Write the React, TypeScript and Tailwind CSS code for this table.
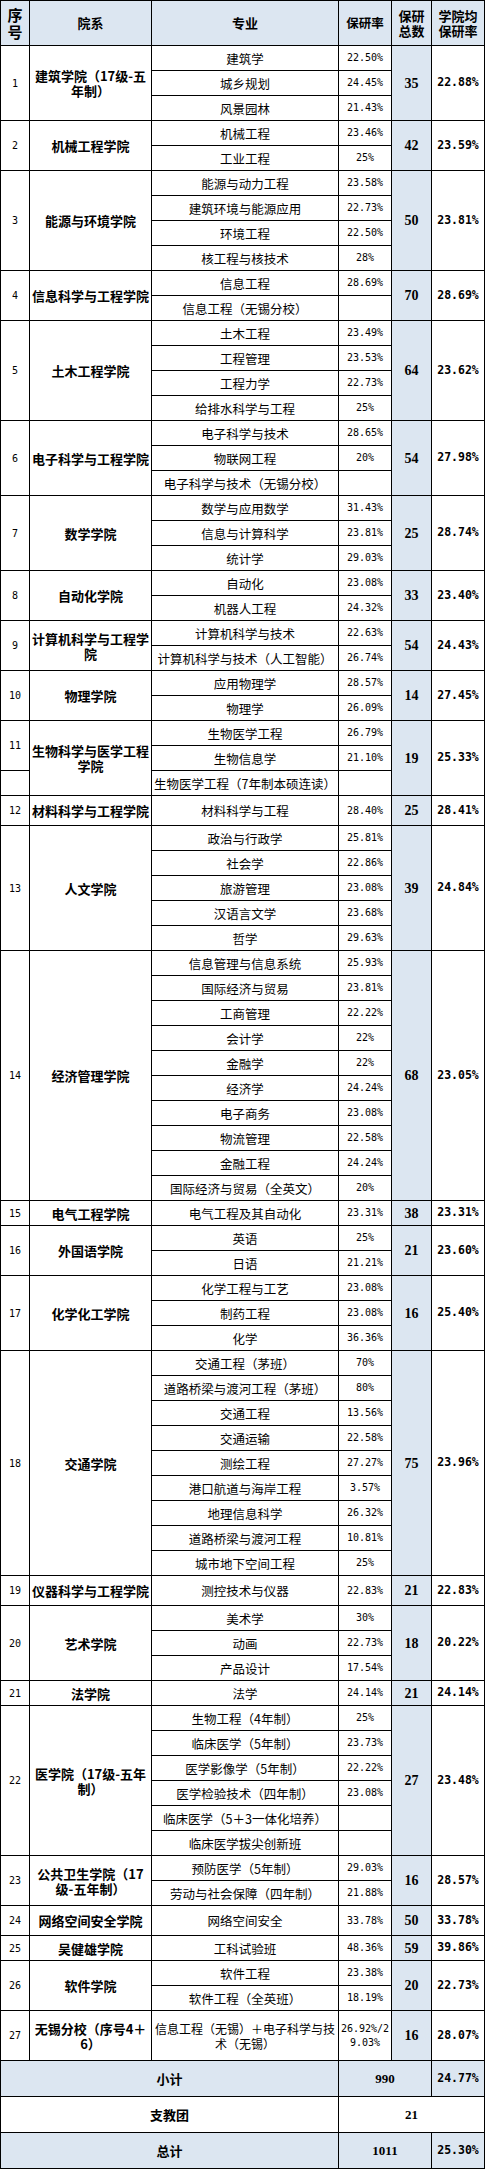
import React from "react";

type College = {
  no: string;
  name: React.ReactNode;
  majors: [React.ReactNode, React.ReactNode][];
  total: string;
  avg: string;
  h?: string;
};

const colleges: College[] = [
  {
    no: "1",
    name: (
      <>
        建筑学院（17级-五
        <br />
        年制）
      </>
    ),
    majors: [
      ["建筑学", "22.50%"],
      ["城乡规划", "24.45%"],
      ["风景园林", "21.43%"],
    ],
    total: "35",
    avg: "22.88%",
  },
  {
    no: "2",
    name: "机械工程学院",
    majors: [
      ["机械工程", "23.46%"],
      ["工业工程", "25%"],
    ],
    total: "42",
    avg: "23.59%",
  },
  {
    no: "3",
    name: "能源与环境学院",
    majors: [
      ["能源与动力工程", "23.58%"],
      ["建筑环境与能源应用", "22.73%"],
      ["环境工程", "22.50%"],
      ["核工程与核技术", "28%"],
    ],
    total: "50",
    avg: "23.81%",
  },
  {
    no: "4",
    name: "信息科学与工程学院",
    majors: [
      ["信息工程", "28.69%"],
      ["信息工程（无锡分校）", ""],
    ],
    total: "70",
    avg: "28.69%",
  },
  {
    no: "5",
    name: "土木工程学院",
    majors: [
      ["土木工程", "23.49%"],
      ["工程管理", "23.53%"],
      ["工程力学", "22.73%"],
      ["给排水科学与工程", "25%"],
    ],
    total: "64",
    avg: "23.62%",
  },
  {
    no: "6",
    name: "电子科学与工程学院",
    majors: [
      ["电子科学与技术", "28.65%"],
      ["物联网工程", "20%"],
      ["电子科学与技术（无锡分校）", ""],
    ],
    total: "54",
    avg: "27.98%",
  },
  {
    no: "7",
    name: "数学学院",
    majors: [
      ["数学与应用数学", "31.43%"],
      ["信息与计算科学", "23.81%"],
      ["统计学", "29.03%"],
    ],
    total: "25",
    avg: "28.74%",
  },
  {
    no: "8",
    name: "自动化学院",
    majors: [
      ["自动化", "23.08%"],
      ["机器人工程", "24.32%"],
    ],
    total: "33",
    avg: "23.40%",
  },
  {
    no: "9",
    name: (
      <>
        计算机科学与工程学
        <br />院
      </>
    ),
    majors: [
      ["计算机科学与技术", "22.63%"],
      ["计算机科学与技术（人工智能）", "26.74%"],
    ],
    total: "54",
    avg: "24.43%",
  },
  {
    no: "10",
    name: "物理学院",
    majors: [
      ["应用物理学", "28.57%"],
      ["物理学", "26.09%"],
    ],
    total: "14",
    avg: "27.45%",
  },
  {
    no: "11",
    name: (
      <>
        生物科学与医学工程
        <br />
        学院
      </>
    ),
    majors: [
      ["生物医学工程", "26.79%"],
      ["生物信息学", "21.10%"],
      ["生物医学工程（7年制本硕连读）", ""],
    ],
    total: "19",
    avg: "25.33%",
  },
  {
    no: "12",
    name: "材料科学与工程学院",
    majors: [["材料科学与工程", "28.40%"]],
    total: "25",
    avg: "28.41%",
    h: "h-[30px]",
  },
  {
    no: "13",
    name: "人文学院",
    majors: [
      ["政治与行政学", "25.81%"],
      ["社会学", "22.86%"],
      ["旅游管理", "23.08%"],
      ["汉语言文学", "23.68%"],
      ["哲学", "29.63%"],
    ],
    total: "39",
    avg: "24.84%",
  },
  {
    no: "14",
    name: "经济管理学院",
    majors: [
      ["信息管理与信息系统", "25.93%"],
      ["国际经济与贸易", "23.81%"],
      ["工商管理", "22.22%"],
      ["会计学", "22%"],
      ["金融学", "22%"],
      ["经济学", "24.24%"],
      ["电子商务", "23.08%"],
      ["物流管理", "22.58%"],
      ["金融工程", "24.24%"],
      ["国际经济与贸易（全英文）", "20%"],
    ],
    total: "68",
    avg: "23.05%",
  },
  {
    no: "15",
    name: "电气工程学院",
    majors: [["电气工程及其自动化", "23.31%"]],
    total: "38",
    avg: "23.31%",
  },
  {
    no: "16",
    name: "外国语学院",
    majors: [
      ["英语", "25%"],
      ["日语", "21.21%"],
    ],
    total: "21",
    avg: "23.60%",
  },
  {
    no: "17",
    name: "化学化工学院",
    majors: [
      ["化学工程与工艺", "23.08%"],
      ["制药工程", "23.08%"],
      ["化学", "36.36%"],
    ],
    total: "16",
    avg: "25.40%",
  },
  {
    no: "18",
    name: "交通学院",
    majors: [
      ["交通工程（茅班）", "70%"],
      ["道路桥梁与渡河工程（茅班）", "80%"],
      ["交通工程", "13.56%"],
      ["交通运输", "22.58%"],
      ["测绘工程", "27.27%"],
      ["港口航道与海岸工程", "3.57%"],
      ["地理信息科学", "26.32%"],
      ["道路桥梁与渡河工程", "10.81%"],
      ["城市地下空间工程", "25%"],
    ],
    total: "75",
    avg: "23.96%",
  },
  {
    no: "19",
    name: "仪器科学与工程学院",
    majors: [["测控技术与仪器", "22.83%"]],
    total: "21",
    avg: "22.83%",
    h: "h-[30px]",
  },
  {
    no: "20",
    name: "艺术学院",
    majors: [
      ["美术学", "30%"],
      ["动画", "22.73%"],
      ["产品设计", "17.54%"],
    ],
    total: "18",
    avg: "20.22%",
  },
  {
    no: "21",
    name: "法学院",
    majors: [["法学", "24.14%"]],
    total: "21",
    avg: "24.14%",
  },
  {
    no: "22",
    name: (
      <>
        医学院（17级-五年
        <br />
        制）
      </>
    ),
    majors: [
      ["生物工程（4年制）", "25%"],
      ["临床医学（5年制）", "23.73%"],
      ["医学影像学（5年制）", "22.22%"],
      ["医学检验技术（四年制）", "23.08%"],
      ["临床医学（5＋3一体化培养）", ""],
      ["临床医学拔尖创新班", ""],
    ],
    total: "27",
    avg: "23.48%",
  },
  {
    no: "23",
    name: (
      <>
        公共卫生学院（17
        <br />
        级-五年制）
      </>
    ),
    majors: [
      ["预防医学（5年制）", "29.03%"],
      ["劳动与社会保障（四年制）", "21.88%"],
    ],
    total: "16",
    avg: "28.57%",
  },
  {
    no: "24",
    name: "网络空间安全学院",
    majors: [["网络空间安全", "33.78%"]],
    total: "50",
    avg: "33.78%",
    h: "h-[30px]",
  },
  {
    no: "25",
    name: "吴健雄学院",
    majors: [["工科试验班", "48.36%"]],
    total: "59",
    avg: "39.86%",
  },
  {
    no: "26",
    name: "软件学院",
    majors: [
      ["软件工程", "23.38%"],
      ["软件工程（全英班）", "18.19%"],
    ],
    total: "20",
    avg: "22.73%",
  },
  {
    no: "27",
    name: (
      <>
        无锡分校（序号4＋
        <br />
        6）
      </>
    ),
    majors: [
      [
        <span className="text-[12px]">
          信息工程（无锡）＋电子科学与技
          <br />
          术（无锡）
        </span>,
        <>
          26.92%/2
          <br />
          9.03%
        </>,
      ],
    ],
    total: "16",
    avg: "28.07%",
    h: "h-[50px]",
  },
];

const cell = "border-r border-b border-black text-center align-middle p-0";
const mono = "font-['DejaVu_Sans_Mono','Noto_Sans_CJK_SC',monospace]";

const App = () => {
  return (
    <div className="w-[485px] bg-white font-['Noto_Sans_CJK_SC',sans-serif] text-black">
      <table className="w-[485px] table-fixed border-separate border-spacing-0 border-t border-l border-black">
        <colgroup>
          <col className="w-[29px]" />
          <col className="w-[122px]" />
          <col className="w-[187px]" />
          <col className="w-[53px]" />
          <col className="w-[40px]" />
          <col className="w-[53px]" />
        </colgroup>
        <tbody>
          {/* HEADER */}
          <tr className="bg-[#dce6f1] font-bold">
            <td className={`${cell} h-[45px] text-[15px] leading-[17px]`}>
              序<br />号
            </td>
            <td className={`${cell} text-[13px]`}>院系</td>
            <td className={`${cell} text-[13px]`}>专业</td>
            <td className={`${cell} text-[12.5px] whitespace-nowrap`}>保研率</td>
            <td className={`${cell} text-[13px] leading-[15px]`}>
              保研
              <br />
              总数
            </td>
            <td className={`${cell} text-[13px] leading-[15px]`}>
              学院均
              <br />
              保研率
            </td>
          </tr>

          {colleges.map((c) =>
            c.majors.map((m, i) => (
              <tr key={c.no + "-" + i}>
                {i === 0 && (
                  <td
                    rowSpan={c.no === "11" ? 2 : c.majors.length}
                    className={`${cell} ${mono} text-[10px]`}
                  >
                    {c.no}
                  </td>
                )}
                {c.no === "11" && i === 2 && <td className={cell} />}
                {i === 0 && (
                  <td
                    rowSpan={c.majors.length}
                    className={`${cell} px-[1px] text-[13px] leading-[15px] font-bold whitespace-nowrap`}
                  >
                    {c.name}
                  </td>
                )}
                <td
                  className={`${cell} ${c.h ?? "h-[25px]"} text-[12.5px] leading-[15px] whitespace-nowrap`}
                >
                  {m[0]}
                </td>
                <td className={`${cell} ${mono} text-[10px] leading-[14px] whitespace-nowrap`}>
                  {m[1]}
                </td>
                {i === 0 && (
                  <td
                    rowSpan={c.majors.length}
                    className={`${cell} bg-[#dce6f1] font-['Liberation_Serif',serif] text-[14px] font-bold ${
                      c.no === "12" ? "align-bottom leading-[14px]" : ""
                    }`}
                  >
                    {c.total}
                  </td>
                )}
                {i === 0 && (
                  <td
                    rowSpan={c.majors.length}
                    className={`${cell} ${mono} text-[11.5px] font-bold whitespace-nowrap`}
                  >
                    {c.avg}
                  </td>
                )}
              </tr>
            ))
          )}

          {/* TOTALS */}
          <tr className="bg-[#dce6f1] font-bold">
            <td colSpan={3} className={`${cell} h-[36px] text-[13px]`}>
              小计
            </td>
            <td colSpan={2} className={`${cell} font-['Liberation_Serif',serif] text-[13px]`}>
              990
            </td>
            <td className={`${cell} ${mono} text-[11.5px]`}>24.77%</td>
          </tr>
          <tr className="font-bold">
            <td colSpan={3} className={`${cell} h-[36px] text-[13px]`}>
              支教团
            </td>
            <td colSpan={3} className={`${cell} font-['Liberation_Serif',serif] text-[13px]`}>
              21
            </td>
          </tr>
          <tr className="bg-[#dce6f1] font-bold">
            <td colSpan={3} className={`${cell} h-[36px] text-[13px]`}>
              总计
            </td>
            <td colSpan={2} className={`${cell} font-['Liberation_Serif',serif] text-[13px]`}>
              1011
            </td>
            <td className={`${cell} ${mono} text-[11.5px]`}>25.30%</td>
          </tr>
        </tbody>
      </table>
    </div>
  );
};

export default App;
